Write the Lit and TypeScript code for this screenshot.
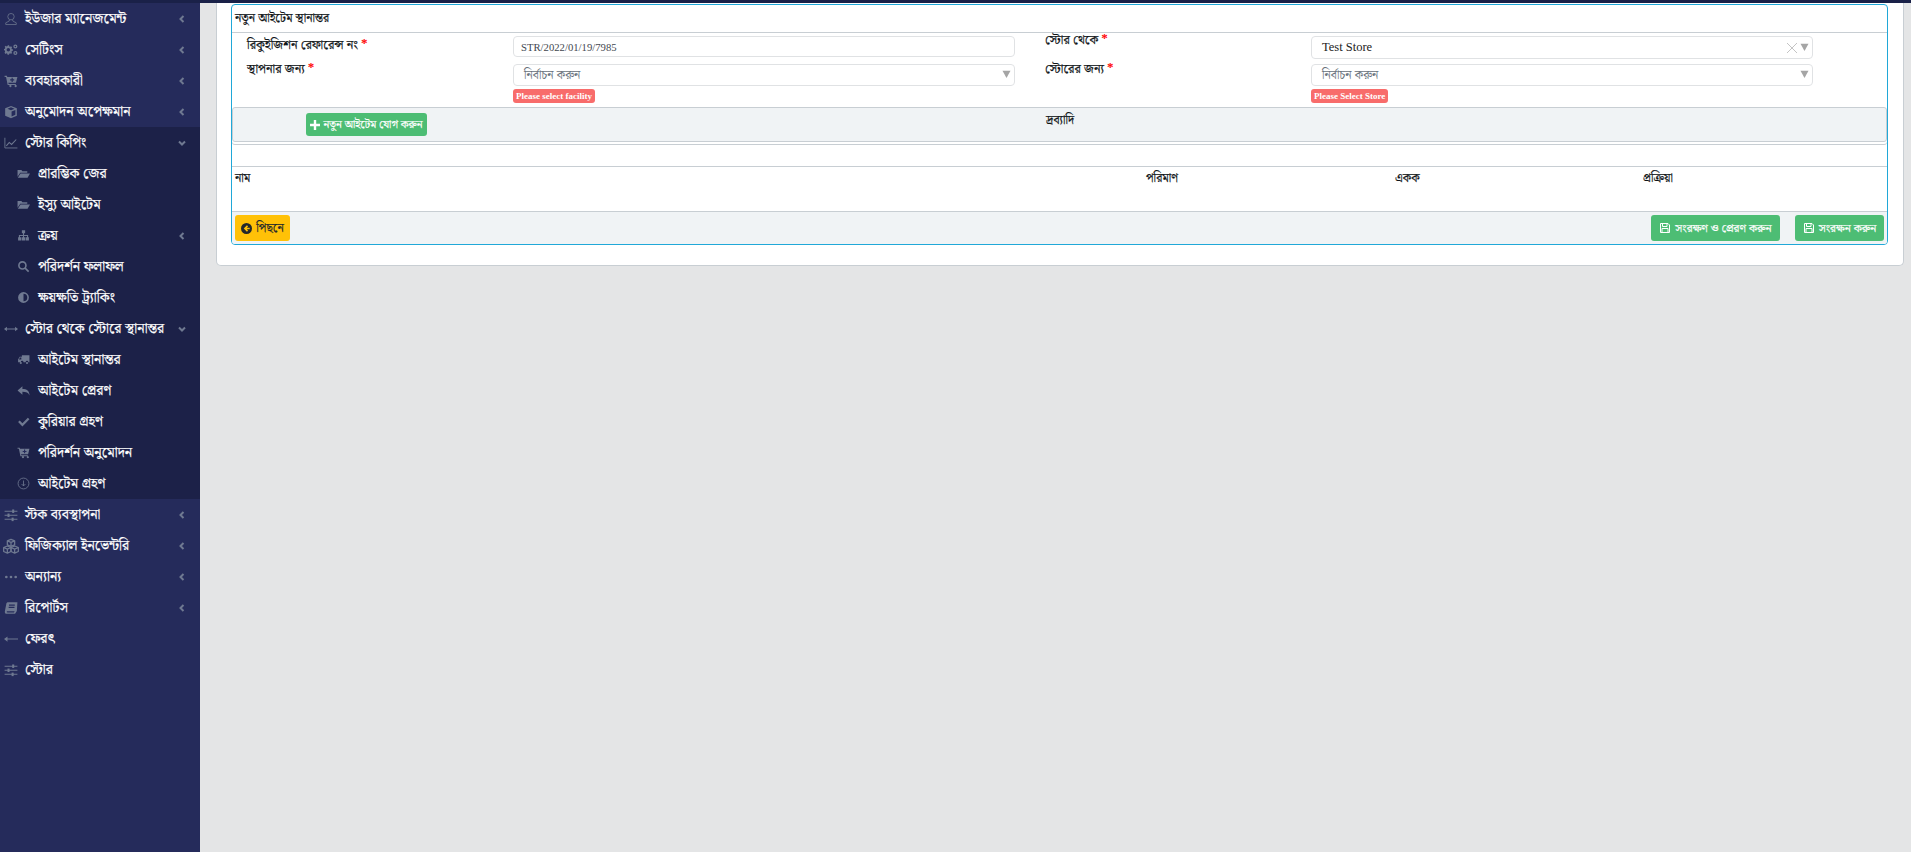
import { LitElement, html, css, svg } from "lit";
import { customElement } from "lit/decorators.js";

const icons: Record<string, unknown> = {
  user: svg`<g fill="none" stroke="currentColor" stroke-width="1.3"><circle cx="12" cy="8" r="5.5"/><path d="M9 13.5v2l-6 3v3h18v-3l-6-3v-2"/></g>`,
  cogs: svg`<g fill="currentColor"><path fill-rule="evenodd" d="M9 6l1.6.6 1.5-1 1.8 1.8-1 1.5.6 1.6 1.8.4v2.5l-1.8.4-.6 1.6 1 1.5-1.8 1.8-1.5-1-1.6.6-.4 1.8H6.1l-.4-1.8-1.6-.6-1.5 1-1.800-1.800 1-1.500L1.600 13 0 12.600v-2.500l1.600-.4.6-1.600-1-1.500L3 4.800l1.500 1 1.600-.6.4-1.200h2.200z M7.400 8.500a3 3 0 100 6 3 3 0 000-6z"/><path fill-rule="evenodd" d="M19.500 2.500a3.500 3.500 0 110 7 3.500 3.500 0 010-7zm0 2.200a1.300 1.300 0 100 2.600 1.300 1.300 0 000-2.600z"/><path fill-rule="evenodd" d="M19.500 13.500a3.500 3.500 0 110 7 3.500 3.500 0 010-7zm0 2.200a1.300 1.300 0 100 2.600 1.300 1.300 0 000-2.600z"/></g>`,
  cart: svg`<path fill="currentColor" d="M1 3h4l.6 2H23l-2.500 10H7.500l.4 2H20v2H6.300L3.500 5H1z M9 20.500a2 2 0 110 .1z M18 20.500a2 2 0 110 .1z"/><path fill="#252b5b" d="M13 6.500h2v2.500h2.500v2H15v2.500h-2V11h-2.500V9H13z"/>`,
  cube: svg`<path fill="currentColor" d="M12 1.500l10 4v13l-10 4-10-4v-13zM12 4L6 6.400l6 2.400 6-2.400zM13 11v8.500l6.500-2.600V8.400z"/>`,
  chart: svg`<path fill="none" stroke="currentColor" stroke-width="1.500" d="M1.500 3v17.500H23"/><path fill="none" stroke="currentColor" stroke-width="1.800" d="M4 17l5-6 4 3.500L21 6"/>`,
  folder: svg`<path fill="currentColor" d="M1 5.500h7l2 2.500h9v2.500H6L1 18z M6.500 12H24l-4.500 8H1.500z"/>`,
  sitemap: svg`<path fill="currentColor" d="M9 2.500h6v5.500h-2v3h7.500v4H22v6h-6v-6h2.500v-2H13v2h2v6H9v-6h2v-2H5.500v2H8v6H2v-6h1.500v-4H11V8H9z"/>`,
  search: svg`<path fill="none" stroke="currentColor" stroke-width="3" d="M10 3.500a6.500 6.500 0 110 13 6.500 6.500 0 010-13zM15 15l6.500 6.500"/>`,
  adjust: svg`<path fill="currentColor" fill-rule="evenodd" d="M12 2a10 10 0 110 20 10 10 0 010-20zm0 3v14a7 7 0 000-14z"/>`,
  arrows: svg`<path fill="currentColor" d="M0 12l5-4v3h14V8l5 4-5 4v-3H5v3z"/>`,
  truck: svg`<path fill="currentColor" d="M9 4h14v13h-2a2.500 2.500 0 00-5 0h-4a2.500 2.500 0 00-5 0H2v-5l3-5h4zM3.500 12H8V8.500H5.500z"/><circle fill="currentColor" cx="7" cy="18.500" r="2"/><circle fill="currentColor" cx="18.500" cy="18.500" r="2"/>`,
  reply: svg`<path fill="currentColor" d="M10 4v5c8 0 13 3 13 12-2-5-6-6.500-13-6.500V20L1 12z"/>`,
  check: svg`<path fill="currentColor" d="M2 13l3-3 5 5L20 5l3 3-13 13z"/>`,
  down: svg`<g fill="none" stroke="currentColor" stroke-width="1.500"><circle cx="12" cy="12" r="10"/><path d="M12 6.500v10M8.500 13l3.500 3.500 3.500-3.500"/></g>`,
  sliders: svg`<g fill="currentColor"><path d="M1 4.500h22v1.800H1zM1 11.500h22v1.800H1zM1 18.500h22v1.800H1z"/><rect x="14" y="2.500" width="3.500" height="6"/><rect x="6" y="9.500" width="3.500" height="6"/><rect x="13" y="16.500" width="3.500" height="6"/></g>`,
  cubes: svg`<g fill="none" stroke="currentColor" stroke-width="1.900" stroke-linejoin="round"><path d="M12 2l5.500 2.300v6L12 12.600l-5.500-2.300v-6zM6.500 4.300L12 6.600l5.500-2.300M12 6.600v6"/><path d="M6.500 12L12 14.300v6L6.500 22.600 1 20.300v-6zM1 14.300l5.500 2.300 5.500-2.300M6.500 16.600v6"/><path d="M17.500 12L23 14.300v6l-5.500 2.300-5.500-2.300v-6zM12 14.300l5.500 2.300 5.500-2.300M17.500 16.600v6"/></g>`,
  dots: svg`<g fill="currentColor"><circle cx="4" cy="12" r="2.300"/><circle cx="12" cy="12" r="2.300"/><circle cx="20" cy="12" r="2.300"/></g>`,
  book: svg`<path fill="currentColor" d="M7 2h16l-1 15-3 5H4.500C2 22 1 20 1.500 17.500L4 4.500C4.200 3 5.500 2 7 2zm1.500 4v2h10V6zM8 10v2h10v-2zM5 17.500c-.5 1.500 0 2 1 2h11l1.300-2z"/>`,
  left: svg`<path fill="currentColor" d="M0 12l6-4.500V11h18v2H6v3.500z"/>`,
};
const ic = (n: string) => html`<svg class="ic ${n}" viewBox="0 0 24 24" aria-hidden="true">${icons[n]}</svg>`;

type Item = { t: string; i: string; a?: "l" | "d"; sub?: boolean; dark?: boolean };
const items: Item[] = [
  { t: "ইউজার ম্যানেজমেন্ট", i: "user", a: "l" },
  { t: "সেটিংস", i: "cogs", a: "l" },
  { t: "ব্যবহারকারী", i: "cart", a: "l" },
  { t: "অনুমোদন অপেক্ষমান", i: "cube", a: "l" },
  { t: "স্টোর কিপিং", i: "chart", a: "d", dark: true },
  { t: "প্রারম্ভিক জের", i: "folder", sub: true, dark: true },
  { t: "ইস্যু আইটেম", i: "folder", sub: true, dark: true },
  { t: "ক্রয়", i: "sitemap", a: "l", sub: true, dark: true },
  { t: "পরিদর্শন ফলাফল", i: "search", sub: true, dark: true },
  { t: "ক্ষয়ক্ষতি ট্র্যাকিং", i: "adjust", sub: true, dark: true },
  { t: "স্টোর থেকে স্টোরে স্থানান্তর", i: "arrows", a: "d", dark: true },
  { t: "আইটেম স্থানান্তর", i: "truck", sub: true, dark: true },
  { t: "আইটেম প্রেরণ", i: "reply", sub: true, dark: true },
  { t: "কুরিয়ার গ্রহণ", i: "check", sub: true, dark: true },
  { t: "পরিদর্শন অনুমোদন", i: "cart", sub: true, dark: true },
  { t: "আইটেম গ্রহণ", i: "down", sub: true, dark: true },
  { t: "স্টক ব্যবস্থাপনা", i: "sliders", a: "l" },
  { t: "ফিজিক্যাল ইনভেন্টরি", i: "cubes", a: "l" },
  { t: "অন্যান্য", i: "dots", a: "l" },
  { t: "রিপোর্টস", i: "book", a: "l" },
  { t: "ফেরৎ", i: "left" },
  { t: "স্টোর", i: "sliders" },
];

const caret = html`<svg class="tri" viewBox="0 0 10 10"><path d="M0 1h10L5 10z"/></svg>`;
const saveIc = html`<svg class="btnic" viewBox="0 0 24 24"><path fill="none" stroke="currentColor" stroke-width="2" d="M3 3h15l3 3v15H3zM7 3v6h9V3M6 21v-8h12v8"/></svg>`;

@customElement("app-root")
export class AppRoot extends LitElement {
  static styles = css`
    :host { display: flex; flex-direction: column; min-height: 852px; background: #e4e5e6;
      font-family: "Noto Serif Bengali", "Lohit Bengali", "Noto Sans Bengali", "Liberation Serif", "DejaVu Serif", serif; color: #0f1417;
      -webkit-text-stroke: .2px currentColor; }
    .top { height: 3px; background: #1a2148; flex: none; }
    .body { display: flex; flex: 1; }
    .side { width: 200px; flex: none; background: #252b5b; color: #fff; font-size: 14px; }
    .row { height: 31px; display: flex; align-items: center; padding-left: 4px; padding-right: 14px; white-space: nowrap; }
    .row.dark { background: #1c2148; }
    .row.sub { padding-left: 17px; }
    .ic { width: 13px; height: 13px; color: #6f7991; flex: none; margin-right: 8px; }
    .row:not(.sub) .ic { width: 14px; height: 14px; margin-right: 7px; }
    .row:not(.sub) .ic.cubes { width: 16px; height: 16px; margin-left: -1px; margin-right: 6px; }
    .name { flex: 1; }
    .chev { width: 8px; height: 8px; flex: none; fill: none; stroke: #6f7991; stroke-width: 2; }
    .main { flex: 1; padding: 0 7px 0 16px; min-width: 0; }
    .card { background: #fff; border: 1px solid #c8ced3; border-top: 0; border-radius: 0 0 5px 5px; padding: 1px 15px 22px 14px; height: 263px; box-sizing: border-box; }
    .inner { border: 1px solid #20a8d8; border-radius: 4px; height: 241px; box-sizing: border-box; display: flex; flex-direction: column; overflow: hidden; }
    .head { height: 27px; flex: none; border-bottom: 1px solid #c8ced3; display: flex; align-items: center; padding-left: 3px; font-size: 12px; }
    .form { height: 74px; flex: none; display: grid; grid-template-columns: 266px 502px 30px 266px 502px; grid-template-rows: 28px 46px; padding-left: 15px; font-size: 12.5px; }
    .lab { line-height: 16px; margin-top: -1px; }
    .lab.second { margin-top: 0; }
    .lab.first { margin-top: 4px; }
    .lab b { color: #f00; font-weight: 400; }
    .fld { padding-top: 3px; }
    .box { box-sizing: border-box; height: 22px; border: 1px solid #e0e2e4; border-radius: 4px; display: flex; align-items: center; background: #fff; }
    .box.inp { height: 21px; padding-left: 7px; font-size: 10.7px; color: #3f474f; font-family: "Liberation Serif", serif; -webkit-text-stroke: 0; }
    .box.sel { padding-left: 10px; padding-right: 3px; font-size: 12px; color: #66707a; -webkit-text-stroke: 0; }
    .box.val { height: 23px; color: #222; font-size: 12.5px; font-family: "Liberation Serif", serif; }
    .box .txt { flex: 1; }
    .tri { width: 9px; height: 8px; fill: #a5a5a5; flex: none; margin-bottom: 2px; }
    .x { width: 10px; height: 10px; stroke: #c4c4c4; stroke-width: 1; fill: none; margin-right: 3px; }
    .err { display: inline-block; margin-top: 3px; background: #f86c6b; color: #fff; font-size: 9px; font-weight: 700; line-height: 14px; padding: 0 3px; border-radius: 3px; font-family: "Liberation Serif", serif; vertical-align: top; -webkit-text-stroke: 0; }
    .panel { height: 33px; flex: none; background: #f0f3f5; border: 1px solid #c8ced3; border-radius: 3px; display: grid; grid-template-columns: 73px 740px 1fr; box-shadow: 0 2px 0 #fff, 0 3px 0 #c8ced3; }
    .btn { background: #4dbd74; color: #fff; border-radius: 3px; display: flex; align-items: center; justify-content: center; gap: 3px; font-size: 11px; white-space: nowrap; }
    .add { grid-column: 2; width: 121px; height: 23px; margin-top: 5px; }
    .add svg { width: 10px; height: 10px; fill: #fff; }
    .goods { font-size: 12px; line-height: 16px; padding-top: 5px; }
    .gap { height: 24px; flex: none; border-bottom: 1px solid #c8ced3; }
    .thead { height: 44px; flex: none; display: grid; grid-template-columns: 911px 249px 248px 1fr; font-size: 12px; padding: 2px 0 0 3px; box-sizing: border-box; }
    .foot { flex: 1; border-top: 1px solid #c8ced3; background: #f0f3f5; display: flex; align-items: center; padding: 0 3px; gap: 15px; }
    .back { width: 55px; height: 26px; background: #ffc107; color: #23282c; border-radius: 3px; display: flex; align-items: center; justify-content: center; gap: 4px; font-size: 12px; margin-right: auto; }
    .back svg { width: 11px; height: 11px; }
    .s1 { width: 129px; height: 26px; font-size: 11.5px; gap: 4px; }
    .s2 { width: 89px; height: 26px; font-size: 11.5px; gap: 4px; }
    .btnic { width: 12px; height: 12px; }
  `;

  render() {
    return html`
      <div class="top"></div>
      <div class="body">
        <nav class="side">
          ${items.map(
            (x) => html`<div class="row ${x.dark ? "dark" : ""} ${x.sub ? "sub" : ""}">
              ${ic(x.i)}<span class="name">${x.t}</span>
              ${x.a
                ? html`<svg class="chev" viewBox="0 0 8 8"><path d="${x.a === "l" ? "M5.500 1L2.500 4l3 3" : "M1 2.500l3 3 3-3"}"/></svg>`
                : ""}
            </div>`
          )}
        </nav>
        <main class="main">
          <div class="card">
            <div class="inner">
              <div class="head">নতুন আইটেম স্থানান্তর</div>
              <div class="form">
                <div class="lab first">রিকুইজিশন রেফারেন্স নং <b>*</b></div>
                <div class="fld"><div class="box inp">STR/2022/01/19/7985</div></div>
                <div></div>
                <div class="lab">স্টোর থেকে <b>*</b></div>
                <div class="fld">
                  <div class="box sel val"><span class="txt">Test Store</span>
                    <svg class="x" viewBox="0 0 10 10"><path d="M0 0l10 10M10 0L0 10"/></svg>${caret}</div>
                </div>
                <div class="lab second">স্থাপনার জন্য <b>*</b></div>
                <div class="fld">
                  <div class="box sel"><span class="txt">নির্বাচন করুন</span>${caret}</div>
                  <span class="err">Please select facility</span>
                </div>
                <div></div>
                <div class="lab second">স্টোরের জন্য <b>*</b></div>
                <div class="fld">
                  <div class="box sel"><span class="txt">নির্বাচন করুন</span>${caret}</div>
                  <span class="err">Please Select Store</span>
                </div>
              </div>
              <div class="panel">
                <div class="btn add">
                  <svg viewBox="0 0 10 10"><path d="M3.800 0h2.400v3.800H10v2.400H6.200V10H3.800V6.200H0V3.800h3.800z"/></svg>
                  নতুন আইটেম যোগ করুন
                </div>
                <div class="goods">দ্রব্যাদি</div>
              </div>
              <div class="gap"></div>
              <div class="thead">
                <div>নাম</div><div>পরিমাণ</div><div>একক</div><div>প্রক্রিয়া</div>
              </div>
              <div class="foot">
                <div class="back">
                  <svg viewBox="0 0 24 24"><path fill="currentColor" fill-rule="evenodd" d="M12 0a12 12 0 110 24 12 12 0 010-24zm1 5L6 12l7 7 2.500-2.500-3-3H19v-3h-6.500l3-3z"/></svg>
                  পিছনে
                </div>
                <div class="btn s1">${saveIc}সংরক্ষণ ও প্রেরণ করুন</div>
                <div class="btn s2">${saveIc}সংরক্ষন করুন</div>
              </div>
            </div>
          </div>
        </main>
      </div>
    `;
  }
}
